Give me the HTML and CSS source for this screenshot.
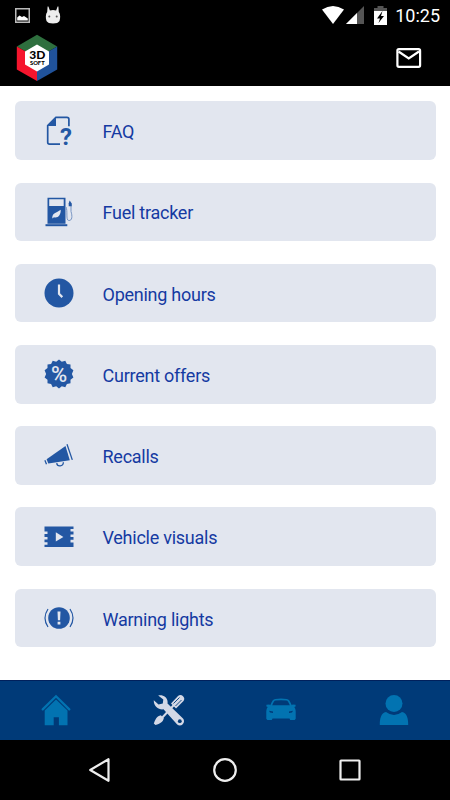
FILE: index.html
```html
<!DOCTYPE html>
<html lang="en">
  <head>
    <meta charset="utf-8">
    <title>3D Soft</title>
    <meta name="viewport" content="width=device-width, initial-scale=1">
    <link rel="stylesheet" href="styles.css">
  </head>
  <body>
    <div class="status-bar">
      <svg class="status-picture" width="15" height="15" viewBox="0 0 15 15">
        <rect x=".75" y=".75" width="13.5" height="13.5" fill="none" stroke="#bbb" stroke-width="1.5"/>
        <path d="M2.2 12.5V9.500l2.300-2 2.500 1.500 2-1 3.800 2.500v2z" fill="#fff"/>
      </svg>
      <svg class="status-cat" width="16" height="18" viewBox="0 0 16 18">
        <path d="M2.600.5h.8l1.500 4q3.100-.8 6.200 0l1.500-4h.8l.4 5.500c1.700 2 1.700 6 .7 9Q13 17.500 8 17.500T1.500 15c-1-3-1-7 .7-9z" fill="#eee"/>
        <circle cx="4.300" cy="10.500" r="1" fill="#555"/>
        <circle cx="11.700" cy="10.500" r="1" fill="#555"/>
      </svg>
      <span class="flex"></span>
      <svg class="status-wifi" width="22" height="18" viewBox="0 0 22 18">
        <path d="M0 3.500Q11-3.500 22 3.500L11 18z" fill="#fff"/>
      </svg>
      <svg class="status-signal" width="18" height="18" viewBox="0 0 18 18">
        <path d="M18 0v18H0z" fill="#555"/>
        <path d="M11 7v11H0z" fill="#fff"/>
      </svg>
      <svg class="status-battery" width="13" height="19" viewBox="0 0 13 19">
        <path d="M0 2h3.500V0h6v2H13v4H0z" fill="#555"/>
        <path d="M0 5h13v14H0z" fill="#fff"/>
        <path d="M8.500 5L3 12.500h3L4.500 17 10 10H7z" fill="#000"/>
      </svg>
      <span class="clock">10:25</span>
    </div>

    <header class="header">
      <svg class="logo" width="42" height="48" viewBox="0 0 42 48">
        <path d="M21 24L.8 12.500 21 .8l20.200 11.700z" fill="#2e6f3e"/>
        <path d="M21 24L.8 12.500v23L21 47z" fill="#f5152d"/>
        <path d="M21 24l20.200-11.500v23L21 47z" fill="#20529a"/>
        <path d="M21 10.500l12 6.900v13.200l-12 6.900-12-6.900V17.400z" fill="#fff"/>
        <text x="21.300" y="25.300" class="logo-big">3D</text>
        <text x="21.300" y="31.300" class="logo-small">SOFT</text>
      </svg>
      <span class="flex"></span>
      <svg width="26" height="20" viewBox="0 0 26 20">
        <rect x="1.400" y="1.200" width="22.700" height="17.600" rx="1.500" fill="none" stroke="#fff" stroke-width="2.200"/>
        <path d="M2.500 3.500l10.250 7L23 3.500" fill="none" stroke="#fff" stroke-width="2.200"/>
      </svg>
    </header>

    <main class="menu">
      <a class="menu-item">
        <svg class="menu-icon" viewBox="0 0 32 32">
          <path d="M17 29.100H6.500q-1.800 0-1.800-1.800V10.700l8.200-8.300h11q2 0 2 1.800v7" fill="none" stroke="#2357a3" stroke-width="1.700"/>
          <path d="M4.700 10.900L13 2.400v8.500z" fill="#2357a3"/>
          <text x="22.800" y="29.800" class="icon-question">?</text>
        </svg>
        <span>FAQ</span>
      </a>
      <a class="menu-item">
        <svg class="menu-icon" viewBox="0 0 32 32">
          <path fill-rule="evenodd" d="M4.500 1.700h18v26h-18zM6.200 3.300v6.800h14.500V3.300z"/>
          <path d="M2.500 28.200h21.800v2H2.500z"/>
          <path d="M9.300 22.500c-.5-5.500 4.200-5.600 8.400-8.700.4 5-2.700 8.700-6.700 7.500z" fill="#e2e6ef"/>
          <path d="M23 11c2 4-.5 13 2.700 13.500 3.600.4 3.800-4.500 2.300-9V8" fill="none" stroke="#7895c3"/>
          <path d="M26.700 4.500l2 3v2.800h-3V7.200z"/>
        </svg>
        <span>Fuel tracker</span>
      </a>
      <a class="menu-item">
        <svg class="menu-icon" viewBox="0 0 32 32">
          <circle cx="16" cy="16" r="14.500"/>
          <path d="M16 7.500v9.300l3.300 3.300" fill="none" stroke="#e2e6ef" stroke-width="2.200"/>
        </svg>
        <span>Opening hours</span>
      </a>
      <a class="menu-item">
        <svg class="menu-icon" viewBox="0 0 32 32">
          <path d="M16 1.500l2.800 2.200 3.500-1 1.600 3.200 3.600.6v3.600l2.900 2.200L28.900 16l1.500 3.500-2.900 2.200v3.600l-3.600.7-1.600 3.200-3.500-1L16 30.500l-2.800-2.300-3.500 1L8.100 26l-3.600-.7v-3.600l-2.900-2.200L3.100 16l-1.500-3.700 2.900-2.200V6.500l3.600-.6 1.600-3.200 3.500 1z"/>
          <text x="16" y="23.800" class="icon-percent">%</text>
        </svg>
        <span>Current offers</span>
      </a>
      <a class="menu-item">
        <svg class="menu-icon" viewBox="0 0 32 32">
          <path d="M3.600 19.300L22.500 6l4.300 14.200-21.500 3.200z"/>
          <path d="M1.900 20.200l1.600 4M24 4.300l5.300 15.600" fill="none" stroke="#2357a3" stroke-width="1.300"/>
          <path d="M13.700 23.200c.5 3.900 6.500 3.700 6.700-.9" fill="none" stroke="#2357a3" stroke-width="1.300"/>
        </svg>
        <span>Recalls</span>
      </a>
      <a class="menu-item">
        <svg class="menu-icon" viewBox="0 0 32 32">
          <path d="M1.500 5.600h29v2.400h-3v2.500h3v3h-3v2.500h3v2.800h-3v2.700h3v4.600h-29v-2.400h3v-2.500h-3v-2.800h3v-2.500h-3v-2.800h3V10.500h-3z"/>
          <path d="M12.800 11.300l7.600 4.600-7.600 4.600z" fill="#e2e6ef"/>
        </svg>
        <span>Vehicle visuals</span>
      </a>
      <a class="menu-item">
        <svg class="menu-icon" viewBox="0 0 32 32">
          <circle cx="16" cy="16" r="10.800"/>
          <path d="M5 7q-6 9 0 18M27 7q6 9 0 18" fill="none" stroke="#2357a3" stroke-width="1.200"/>
          <path d="M14.500 9.500h3l-.4 8.800h-2.200zM14.600 19.800h2.800v2.600h-2.800z" fill="#e2e6ef"/>
        </svg>
        <span>Warning lights</span>
      </a>
    </main>

    <nav class="tabs">
      <a class="tab">
        <svg width="32" height="32" viewBox="0 0 32 32">
          <path d="M2.700 15.400L16 2.300l13.300 13.100" fill="none" stroke="#0273b1" stroke-width="2.300" stroke-linecap="round"/>
          <path d="M4.700 16.400L16 5.400l11.500 11v14.800h-8.600v-8h-5.200v8h-9z"/>
        </svg>
      </a>
      <a class="tab tab-active">
        <svg width="32" height="32" viewBox="0 0 32 32">
          <path d="M8 25L25.500 6" fill="none" stroke="#d3d8e6" stroke-width="2"/>
          <path d="M18 9.500l7-7.500c3-3 8.300 1.500 5.500 5L23 14.500z"/>
          <path d="M20.500 9.500l6-6M22.500 12l6-6" fill="none" stroke="#003a78" stroke-width=".9"/>
          <path d="M7.800 21.200l3 3C10 28 7 29.500 2.500 31l-1.700-1.500C2.300 25 4 22 7.800 21.200z"/>
          <path d="M5.200 1.500C9.500.300 15.500 3 14.500 9.500L30 24.500c3.300 4-2 9-5.800 6L10.500 15.300C5.500 16 .5 12.300.8 6.200l4.700 4.300 4.300-1 .5-4z"/>
          <circle cx="26.800" cy="27.200" r="1.900" fill="#003a78"/>
        </svg>
      </a>
      <a class="tab">
        <svg width="32" height="32" viewBox="0 0 32 32">
          <path fill-rule="evenodd" d="M5.200 11.200C7.200 7 8 5 10.300 4.900q5.700-.6 11.400 0C24 5 24.800 7 26.800 11.200l.8-.8 3 .3v1.800l-1.300.5c1.500 2 1.500 4 1.400 7.300v4.500l-1 1.200h-4.500l-.7-1.500h-17L6.800 26H2.300l-1-1.200v-4.500c-.1-3.300-.1-5.300 1.400-7.300l-1.300-.5v-1.800l3-.3zM7.200 11.200h17.600c-1.300-3-2-4.700-3.600-4.800q-5.200-.5-10.400 0C9.200 6.500 8.500 8.200 7.200 11.200z"/>
          <path d="M4 16.700l4 .9v1.500l-3-.5zM28 16.700l-4 .9v1.500l3-.5z" fill="#003a78"/>
        </svg>
      </a>
      <a class="tab">
        <svg width="32" height="32" viewBox="0 0 32 32">
          <circle cx="16" cy="9.500" r="8.500"/>
          <path d="M1.800 31c0-6.500 1.200-12 6.200-13q8 6 16 0c5 1 6.200 6.500 6.200 13z"/>
        </svg>
      </a>
    </nav>

    <div class="system-nav">
      <svg width="24" height="24" viewBox="0 0 24 24">
        <path d="M20.500 1.200v21.600L2.200 12z"/>
      </svg>
      <svg width="24" height="24" viewBox="0 0 24 24">
        <circle cx="12" cy="12" r="10.800"/>
      </svg>
      <svg width="24" height="24" viewBox="0 0 24 24">
        <rect x="2.500" y="2.500" width="19" height="19" rx=".5"/>
      </svg>
    </div>
  </body>
</html>
```
FILE: styles.css
```css
body {
  margin: 0;
  height: 800px;
  display: flex;
  flex-direction: column;
  background: #fff;
  font-family: Roboto, sans-serif;
  overflow: hidden;
}
svg {
  display: block;
  flex-shrink: 0;
}
.flex {
  flex: 1;
}
.status-bar {
  display: flex;
  align-items: center;
  height: 30px;
  padding: 0 10px 0 15px;
  background: #000;
  color: #fff;
}
.status-cat {
  margin: -1px 0 0 15px;
}
.status-signal {
  margin-left: 2px;
}
.status-battery {
  margin-left: 10px;
}
.clock {
  margin-left: 8px;
  font-size: 18px;
  font-weight: 400;
  line-height: 31px;
}
.header {
  display: flex;
  align-items: center;
  height: 56px;
  box-sizing: border-box;
  padding: 0 28px 0 16px;
  background: #000;
}
.logo-big, .logo-small {
  font-family: Lato, sans-serif;
  font-weight: 900;
  text-anchor: middle;
}
.logo-big {
  font-size: 12px;
}
.logo-small {
  font-size: 5.800px;
}
.menu {
  flex: 1;
  display: flex;
  flex-direction: column;
  gap: 22.550px;
  padding: 15.300px 14.500px 0;
}
.menu-item {
  display: flex;
  align-items: center;
  gap: 28px;
  height: 58.700px;
  box-sizing: border-box;
  padding: 0 28px;
  border-radius: 6px;
  background: #e2e6ef;
  color: #153aa2;
  font-size: 18px;
  letter-spacing: -.25px;
}
.menu-item span {
  padding-top: 2px;
}
.menu-icon {
  width: 32px;
  height: 32px;
  fill: #2357a3;
  overflow: visible;
}
.icon-question {
  font-size: 24px;
  font-weight: 700;
  text-anchor: middle;
}
.icon-percent {
  font-size: 22px;
  font-weight: 500;
  text-anchor: middle;
  fill: #e2e6ef;
}
.tabs {
  display: flex;
  height: 60px;
  background: #003a78;
  box-shadow: inset 0 1px #00205c;
}
.tab {
  flex: 1;
  display: flex;
  align-items: center;
  justify-content: center;
  fill: #0273b1;
}
.tab-active {
  fill: #d3d8e6;
}
.system-nav {
  display: flex;
  align-items: center;
  justify-content: center;
  gap: 101px;
  height: 60px;
  background: #000;
}
.system-nav svg {
  fill: none;
  stroke: #eee;
  stroke-width: 2.200;
  stroke-linejoin: round;
}
```
